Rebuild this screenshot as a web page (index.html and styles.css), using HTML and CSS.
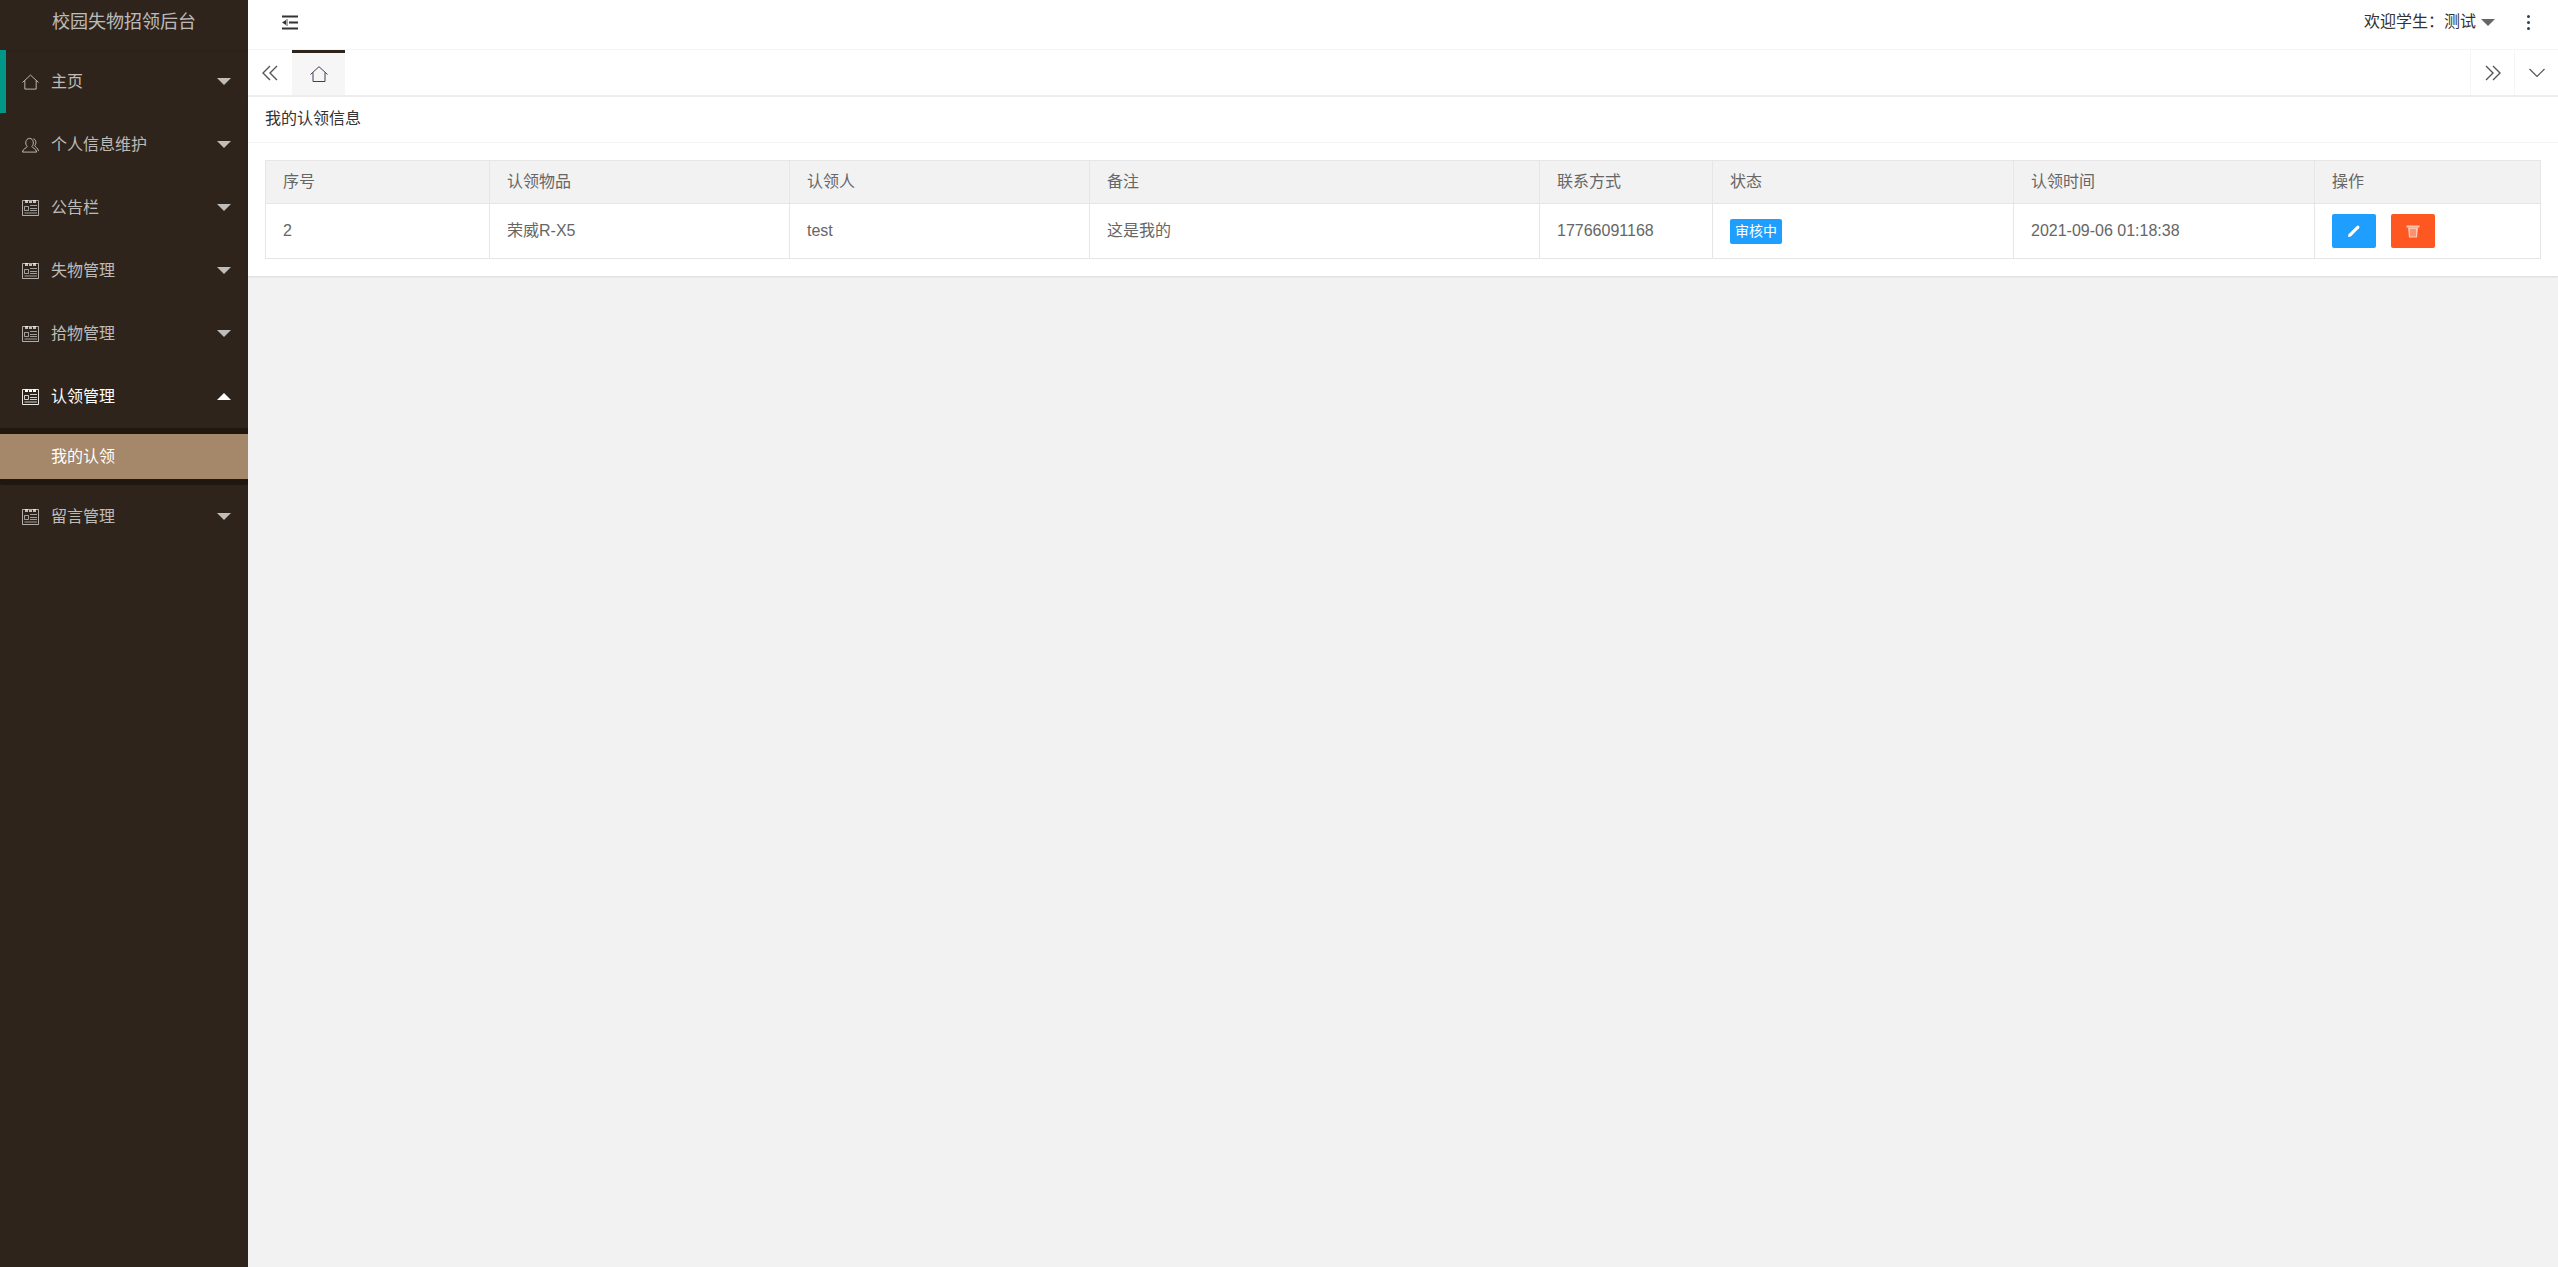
FILE: index.html
```html
<!DOCTYPE html>
<html lang="zh-CN">
  <head>
    <meta charset="UTF-8" />
    <title>校园失物招领后台</title>
    <link rel="stylesheet" href="styles.css">
  </head>
  <body>
    <svg class="sprite" width="0" height="0">
      <symbol id="i-home" viewBox="0 0 18 16">
        <path d="M0.5 8.5 L9 0.7 L17.5 8.5 M3 6.5 V15.5 H15 V6.5" fill="none" stroke="currentColor" stroke-width="1"/>
      </symbol>
      <symbol id="i-user" viewBox="0 0 18 16">
        <path d="M5.5 9.5 C3 7.5 3.5 1 8 1 C12.5 1 13 7.5 10.5 9.5 C11 11.5 15 11.5 15.5 15.5 H0.5 C1 11.5 5 11.5 5.5 9.5 Z M12 1.5 C15 2 15.5 6.5 13.5 8.5 C14 10.5 17 11 17.5 14.5" fill="none" stroke="currentColor" stroke-width="1"/>
      </symbol>
      <symbol id="i-cal" viewBox="0 0 17 16">
        <path d="M0.5 0.5 H16.5 V15.5 H0.5 Z" fill="none" stroke="currentColor" stroke-width="0.9"/>
        <path d="M3 0 H6 V3 H3 Z M7 1 H10 V3 H7 Z M11 0 H14 V3 H11 Z" fill="currentColor"/>
        <path d="M8 5.5 H15 M8 8.5 H15 M8 10.5 H15 M2.5 13 H15 M2.5 6.5 H6.5 V10.5 H2.5 Z" fill="none" stroke="currentColor" stroke-width="0.8"/>
      </symbol>
    </svg>

    <div class="layout">
      <div class="side">
        <div class="logo">校园失物招领后台</div>
        <ul class="nav">
          <li class="navItem current">
            <svg class="navIcon"><use href="#i-home"/></svg>主页<span class="caret"></span>
          </li>
          <li class="navItem">
            <svg class="navIcon"><use href="#i-user"/></svg>个人信息维护<span class="caret"></span>
          </li>
          <li class="navItem">
            <svg class="navIcon"><use href="#i-cal"/></svg>公告栏<span class="caret"></span>
          </li>
          <li class="navItem">
            <svg class="navIcon"><use href="#i-cal"/></svg>失物管理<span class="caret"></span>
          </li>
          <li class="navItem">
            <svg class="navIcon"><use href="#i-cal"/></svg>拾物管理<span class="caret"></span>
          </li>
          <li class="navItem open">
            <svg class="navIcon"><use href="#i-cal"/></svg>认领管理<span class="caret up"></span>
          </li>
          <li class="subNav">
            <div class="subItem">我的认领</div>
          </li>
          <li class="navItem">
            <svg class="navIcon"><use href="#i-cal"/></svg>留言管理<span class="caret"></span>
          </li>
        </ul>
      </div>

      <div class="main">
        <div class="topBar">
          <svg class="flexIcon" width="16" height="15" viewBox="0 0 16 15">
            <path d="M0 1.5 H16 M7 7.5 H16 M0 13.5 H16" stroke="#333" stroke-width="2" fill="none"/>
            <path d="M4 5 L0 7.5 L4 10 Z" fill="#333"/>
            <path d="M5 4 V11" stroke="#555" stroke-width="1"/>
          </svg>
          <div class="userBox">
            <span>欢迎学生：测试</span>
            <span class="userCaret"></span>
            <span class="dots"><i></i><i></i><i></i></span>
          </div>
        </div>

        <div class="tabBar">
          <div class="tabBtn">
            <svg width="18" height="16" viewBox="0 0 18 16"><path d="M9 1 L2 8 L9 15 M16 1 L9 8 L16 15" fill="none" stroke="#555" stroke-width="1.4"/></svg>
          </div>
          <div class="tabHome">
            <svg class="homeIcon"><use href="#i-home"/></svg>
          </div>
          <div class="tabSpace"></div>
          <div class="tabBtn bordered">
            <svg width="18" height="16" viewBox="0 0 18 16"><path d="M2 1 L9 8 L2 15 M9 1 L16 8 L9 15" fill="none" stroke="#555" stroke-width="1.4"/></svg>
          </div>
          <div class="tabBtn bordered">
            <svg width="18" height="10" viewBox="0 0 18 10"><path d="M1.5 1 L9 8.5 L16.5 1" fill="none" stroke="#555" stroke-width="1.2"/></svg>
          </div>
        </div>

        <div class="card">
          <div class="cardHeader">我的认领信息</div>
          <div class="cardBody">
            <table class="dataTable">
              <colgroup>
                <col class="c1"><col class="c2"><col class="c3"><col class="c4">
                <col class="c5"><col class="c6"><col class="c7"><col class="c8">
              </colgroup>
              <thead>
                <tr>
                  <th>序号</th>
                  <th>认领物品</th>
                  <th>认领人</th>
                  <th>备注</th>
                  <th>联系方式</th>
                  <th>状态</th>
                  <th>认领时间</th>
                  <th>操作</th>
                </tr>
              </thead>
              <tbody>
                <tr>
                  <td>2</td>
                  <td>荣威R-X5</td>
                  <td>test</td>
                  <td>这是我的</td>
                  <td>17766091168</td>
                  <td><span class="badge">审核中</span></td>
                  <td>2021-09-06 01:18:38</td>
                  <td>
                    <div class="btnRow">
                      <span class="opBtn edit">
                        <svg width="14" height="14" viewBox="0 0 14 14"><path d="M1 13 L1.6 10.2 L9.8 2 Q11 1 12 2 Q13 3 12 4.2 L3.8 12.4 Z" fill="#fff"/></svg>
                      </span>
                      <span class="opBtn del">
                        <svg width="14" height="14" viewBox="0 0 14 14"><path d="M0.5 1.5 H13.5 V3.5 H0.5 Z" fill="#ffc4b0"/><path d="M2 3.5 H12 L11 13.5 H3 Z" fill="#ffc4b0"/><path d="M5 5 V12.5 M7 5 V12.5 M9 5 V12.5" stroke="#f2622e" stroke-width="1"/></svg>
                      </span>
                    </div>
                  </td>
                </tr>
              </tbody>
            </table>
          </div>
        </div>
      </div>
    </div>
  </body>
</html>
```

FILE: styles.css
```css
* {
  box-sizing: border-box;
}

html, body {
  margin: 0;
  height: 100%;
}

body {
  background-color: #f2f2f2;
  font-family: "Liberation Sans", "Noto Sans CJK SC", sans-serif;
  font-size: 16px;
  line-height: 24px;
  color: #666;
}

.sprite {
  display: block;
  position: absolute;
}

.layout {
  display: flex;
  height: 100%;
}

/*------ SIDE MENU ---------*/
.side {
  width: 248px;
  flex-shrink: 0;
  background-color: #2e241c;
}

.logo {
  height: 50px;
  line-height: 44px;
  text-align: center;
  font-size: 18px;
  color: rgba(255, 255, 255, 0.7);
  box-shadow: 0 1px 2px rgba(0, 0, 0, 0.15);
}

.nav {
  list-style: none;
  margin: 0;
  padding: 0;
}

.navItem {
  display: flex;
  align-items: center;
  height: 63px;
  padding-left: 22px;
  color: rgba(255, 255, 255, 0.7);
  position: relative;
}

.navItem.current:before {
  content: "";
  position: absolute;
  left: 0;
  top: 0;
  bottom: 0;
  width: 6px;
  background-color: #009688;
}

.navItem.open {
  color: #fff;
}

.navIcon {
  width: 17px;
  height: 16px;
  margin-right: 12px;
}

.caret {
  margin-left: auto;
  margin-right: 17px;
  width: 0;
  height: 0;
  border-style: solid;
  border-width: 7px 7px 0 7px;
  border-color: rgba(255, 255, 255, 0.7) transparent transparent transparent;
}

.caret.up {
  border-width: 0 7px 7px 7px;
  border-color: transparent transparent #fff transparent;
}

.subNav {
  padding: 6px 0;
  background-color: #1f1710;
  border-radius: 2px;
}

.subItem {
  height: 45px;
  line-height: 45px;
  padding-left: 51px;
  background-color: #a58769;
  color: #fff;
}

/*------ MAIN ---------*/
.main {
  flex: 1;
  min-width: 0;
}

.topBar {
  display: flex;
  align-items: center;
  justify-content: space-between;
  height: 50px;
  padding-left: 34px;
  padding-bottom: 5px;
  background-color: #fff;
  border-bottom: 1px solid #f6f6f6;
}

.flexIcon {
  display: block;
}

.userBox {
  display: flex;
  align-items: center;
  color: #333;
}

.userCaret {
  width: 0;
  height: 0;
  margin-left: 5px;
  border-style: solid;
  border-width: 7px 7px 0 7px;
  border-color: #666 transparent transparent transparent;
}

.dots {
  display: flex;
  flex-direction: column;
  gap: 3px;
  margin: 0 28px 0 32px;
}

.dots i {
  display: block;
  width: 3px;
  height: 3px;
  border-radius: 50%;
  background-color: #2f4056;
}

.tabBar {
  display: flex;
  height: 47px;
  background-color: #fff;
  border-bottom: 2px solid #eee;
}

.tabBtn {
  width: 44px;
  display: flex;
  align-items: center;
  justify-content: center;
}

.tabBtn.bordered {
  border-left: 1px solid #f6f6f6;
}

.tabHome {
  width: 53px;
  display: flex;
  align-items: center;
  justify-content: center;
  background-color: #f6f6f6;
  border-top: 3px solid #2e241c;
}

.homeIcon {
  width: 18px;
  height: 16px;
  color: #4a3a55;
}

.tabSpace {
  flex: 1;
}

.card {
  background-color: #fff;
  box-shadow: 0 1px 2px rgba(0, 0, 0, 0.1);
}

.cardHeader {
  height: 46px;
  line-height: 44px;
  padding-left: 17px;
  color: #333;
  border-bottom: 1px solid #f6f6f6;
}

.cardBody {
  padding: 17px 18px 17px 17px;
}

.dataTable {
  width: 100%;
  table-layout: fixed;
  border-collapse: collapse;
}

.c1 { width: 224px; }
.c2 { width: 300px; }
.c3 { width: 300px; }
.c4 { width: 450px; }
.c5 { width: 173px; }
.c6 { width: 301px; }
.c7 { width: 301px; }
.c8 { width: 226px; }

.dataTable th,
.dataTable td {
  padding: 0 17px;
  border: 1px solid #e6e6e6;
  text-align: left;
  font-weight: normal;
  color: #666;
}

.dataTable th {
  height: 43px;
  background-color: #f2f2f2;
}

.dataTable td {
  height: 55px;
}

.badge {
  display: inline-block;
  height: 25px;
  line-height: 25px;
  padding: 0 5px;
  font-size: 14px;
  color: #fff;
  background-color: #1e9fff;
  border-radius: 2px;
  vertical-align: middle;
}

.btnRow {
  display: flex;
  gap: 15px;
}

.opBtn {
  width: 44px;
  height: 34px;
  display: flex;
  align-items: center;
  justify-content: center;
  border-radius: 2px;
}

.opBtn.edit {
  background-color: #1e9fff;
}

.opBtn.del {
  background-color: #ff5722;
}
```
